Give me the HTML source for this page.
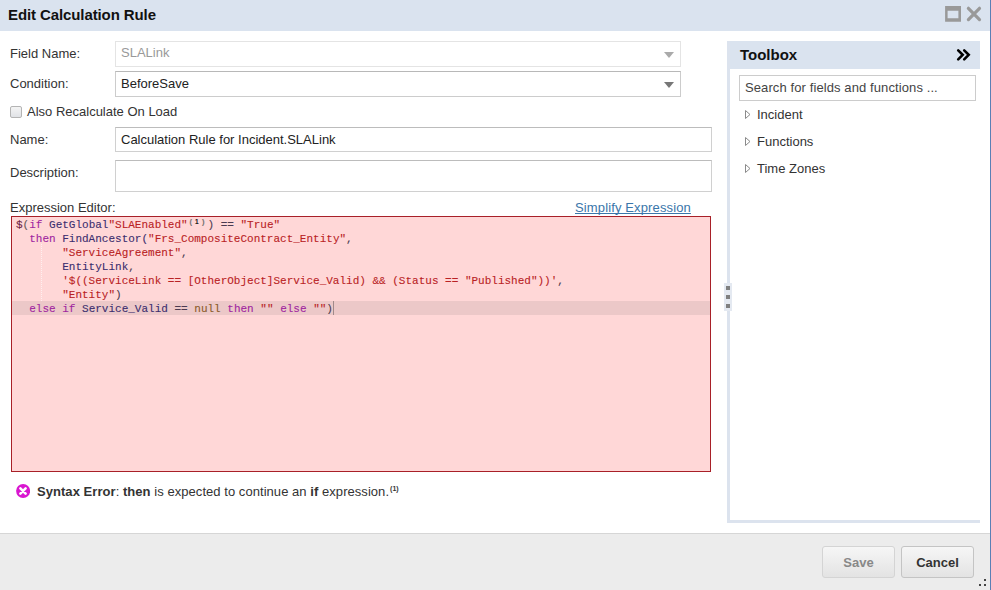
<!DOCTYPE html>
<html><head><meta charset="utf-8">
<style>
*{box-sizing:border-box;}
html,body{margin:0;padding:0;}
body{width:991px;height:590px;position:relative;overflow:hidden;background:#fff;font-family:"Liberation Sans",sans-serif;font-size:13px;color:#333;}
.abs{position:absolute;}
#title{left:0;top:0;width:990px;height:31px;background:#dae3ef;}
#title .t{position:absolute;left:8px;top:6px;font-size:15px;font-weight:bold;color:#111;line-height:18px;letter-spacing:-0.1px;}
#rborder{left:990px;top:0;width:1px;height:590px;background:#5a7fb5;}
.lbl{position:absolute;left:10px;line-height:16px;color:#333;}
.box{position:absolute;border:1px solid #d0d0d0;border-top-color:#bcbcbc;background:#fff;}
.box .v{position:absolute;left:5px;top:4px;line-height:16px;}
.arrow{position:absolute;width:0;height:0;border-left:4.5px solid transparent;border-right:4.5px solid transparent;border-top:6px solid #777;}
#editor{left:11px;top:216px;width:700px;height:256px;background:#ffd7d7;border:1px solid #a82028;}
#code{position:absolute;left:4px;top:1px;font-family:"Liberation Mono",monospace;font-size:11px;line-height:14px;white-space:pre;color:#333;-webkit-text-stroke:0.1px;}
.k{color:#a0259f;}
.f{color:#3b2d6e;}
.s{color:#b92224;}
.n{color:#8a5a2a;}
.p{color:#6d1c40;}
.o{color:#4a3a50;}
.sup{display:inline-block;width:19.8px;height:10px;position:relative;vertical-align:top;}
.sup i{position:absolute;top:-1px;font-style:normal;font-family:"Liberation Sans",sans-serif;font-size:7.5px;line-height:10px;color:#707070;font-weight:bold;}
.sup b{position:absolute;left:7.3px;top:-1px;font-family:"Liberation Sans",sans-serif;font-size:6.5px;line-height:10px;color:#1a1a1a;font-weight:bold;}
#footer{left:0;top:533px;width:990px;height:57px;background:#ececec;border-top:1px solid #d6d6d6;}
.btn{position:absolute;top:546px;height:32px;width:73px;border:1px solid #c4c4c4;border-radius:3px;background:linear-gradient(#f6f6f6,#e3e3e3);font-weight:bold;text-align:center;line-height:31px;font-size:13px;}
#tb{left:727px;top:41px;width:253px;height:482px;border-left:3px solid #dce3ee;border-bottom:3px solid #dce3ee;}
#tbh{left:727px;top:41px;width:253px;height:28px;background:#dae3ef;}
</style></head>
<body>
<div id="title" class="abs"><div class="t">Edit Calculation Rule</div>
<svg class="abs" style="left:940px;top:0px;" width="26" height="30"><path fill-rule="evenodd" fill="#999" d="M5.1 6.1 H21 V21.8 H5.1 Z M7.6 10.7 V18.3 H18.4 V10.7 Z"/></svg>
<svg class="abs" style="left:965px;top:5px;" width="18" height="18"><path d="M3.4 3.3 L14.5 14.6 M14.5 3.3 L3.4 14.6" stroke="#999" stroke-width="3.2" stroke-linecap="round"/></svg>
</div>

<div class="lbl" style="top:46px;">Field Name:</div>
<div class="box" style="left:115px;top:41px;width:566px;height:26px;border-color:#e4e4e4;"><div class="v" style="color:#999;top:3px;">SLALink</div><div class="arrow" style="left:548px;top:10px;border-top-color:#aaa;border-left-width:5px;border-right-width:5px;"></div></div>

<div class="lbl" style="top:76px;">Condition:</div>
<div class="box" style="left:115px;top:71px;width:566px;height:26px;border-color:#cccccc;border-top-color:#b8b8b8;"><div class="v" style="color:#222;">BeforeSave</div><div class="arrow" style="left:548px;top:10px;border-top-color:#777;border-left-width:5px;border-right-width:5px;"></div></div>

<div class="abs" style="left:10px;top:106px;width:12px;height:12px;border:1px solid #b4b4b4;border-radius:2px;background:linear-gradient(#f4f4f4,#e0e2e6);"></div>
<div class="lbl" style="left:27px;top:104px;">Also Recalculate On Load</div>

<div class="lbl" style="top:132px;">Name:</div>
<div class="box" style="left:115px;top:127px;width:597px;height:25px;"><div class="v" style="color:#222;top:4px;">Calculation Rule for Incident.SLALink</div></div>

<div class="lbl" style="top:165px;">Description:</div>
<div class="box" style="left:115px;top:160px;width:597px;height:32px;"></div>

<div class="lbl" style="top:200px;">Expression Editor:</div>
<div class="abs" style="left:575px;top:200px;line-height:16px;color:#3a76aa;text-decoration:underline;text-decoration-skip-ink:none;letter-spacing:0.13px;">Simplify Expression</div>

<div id="editor" class="abs">
<div class="abs" style="left:0;top:84px;width:698px;height:14px;background:#ecc8c8;"></div>
<div class="abs" style="left:29px;top:27px;width:0;height:57px;border-left:1px dotted rgba(255,255,255,0.6);"></div>
<div class="abs" style="left:321px;top:84px;width:1px;height:14px;background:#a08a8a;"></div>
<div id="code"><span class="p">$</span><span style="color:#665a5a">(</span><span class="k">if</span> <span class="f">GetGlobal</span><span class="s">"SLAEnabled"</span><span class="sup"><i style="left:1.8px;">(</i><b>1</b><i style="left:14.3px;">)</i></span><span class="o">) == </span><span class="s">"True"</span>
  <span class="k">then</span> <span class="f">FindAncestor(</span><span class="s">"Frs_CompositeContract_Entity"</span><span class="o">,</span>
       <span class="s">"ServiceAgreement"</span><span class="o">,</span>
       <span class="f">EntityLink</span><span class="o">,</span>
       <span class="s">'$((ServiceLink == [OtherObject]Service_Valid) &amp;&amp; (Status == "Published"))'</span><span class="o">,</span>
       <span class="s">"Entity"</span><span class="o">)</span>
  <span class="k">else</span> <span class="k">if</span> <span class="f">Service_Valid</span> <span class="o">==</span> <span class="n">null</span> <span class="k">then</span> <span class="s">""</span> <span class="k">else</span> <span class="s">""</span><span class="o">)</span></div>
</div>

<svg class="abs" style="left:15px;top:484px;" width="15" height="15"><circle cx="8.1" cy="7" r="7" fill="#d916d0"/><path d="M5.4 4.4 L10.6 9.6 M10.6 4.4 L5.4 9.6" stroke="#fff" stroke-width="2.6" stroke-linecap="round"/></svg>
<div class="lbl" style="left:37px;top:484px;line-height:16px;letter-spacing:0.05px;"><b>Syntax Error</b>: <b>then</b> is expected to continue an <b>if</b> expression.<span style="position:relative;top:-5px;font-size:7px;font-weight:bold;letter-spacing:0;margin-left:1px;">(1)</span></div>

<div id="tbh" class="abs"><div class="abs" style="left:13px;top:5px;font-size:15px;font-weight:bold;color:#111;line-height:18px;">Toolbox</div>
<svg class="abs" style="left:218px;top:1px;" width="30" height="26"><path d="M13.2 8.3 L17.7 12.85 L13.2 17.4 M19.2 8.3 L23.7 12.85 L19.2 17.4" fill="none" stroke="#000" stroke-width="2.6" stroke-linecap="round"/></svg></div>
<div id="tb" class="abs"></div>
<div class="box" style="left:739px;top:75px;width:237px;height:26px;border-color:#ccc;"><div class="v" style="color:#444;top:4px;letter-spacing:0.1px;">Search for fields and functions ...</div></div>
<svg class="abs" style="left:744px;top:109px;" width="8" height="11"><path d="M1.5 1.5 L6 5.5 L1.5 9.5 Z" fill="none" stroke="#8a8a8a" stroke-width="1"/></svg>
<div class="lbl" style="left:757px;top:107px;">Incident</div>
<svg class="abs" style="left:744px;top:136px;" width="8" height="11"><path d="M1.5 1.5 L6 5.5 L1.5 9.5 Z" fill="none" stroke="#8a8a8a" stroke-width="1"/></svg>
<div class="lbl" style="left:757px;top:134px;">Functions</div>
<svg class="abs" style="left:744px;top:163px;" width="8" height="11"><path d="M1.5 1.5 L6 5.5 L1.5 9.5 Z" fill="none" stroke="#8a8a8a" stroke-width="1"/></svg>
<div class="lbl" style="left:757px;top:161px;">Time Zones</div>

<div id="footer" class="abs"></div>
<div class="btn" style="left:822px;color:#888;border-color:#d4d4d4;">Save</div>
<div class="btn" style="left:901px;color:#333;">Cancel</div>

<div class="abs" style="left:724px;top:283px;width:8px;height:28px;background:#e4e9f1;"></div>
<div class="abs" style="left:726px;top:286px;width:4px;height:4px;background:#808080;"></div>
<div class="abs" style="left:726px;top:295px;width:4px;height:4px;background:#808080;"></div>
<div class="abs" style="left:726px;top:304px;width:4px;height:4px;background:#808080;"></div>
<div class="abs" style="left:984px;top:579px;width:2px;height:2px;background:#444;"></div>
<div class="abs" style="left:979px;top:584px;width:2px;height:2px;background:#444;"></div>
<div class="abs" style="left:984px;top:584px;width:2px;height:2px;background:#444;"></div>
<div id="rborder" class="abs"></div>
</body></html>
